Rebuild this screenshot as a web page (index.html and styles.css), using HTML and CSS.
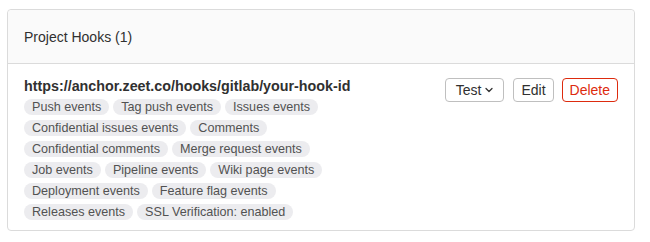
FILE: index.html
```html
<!DOCTYPE html>
<html lang="en">
<head>
    <meta charset="UTF-8">
    <title>Project Hooks</title>
    <link rel="stylesheet" href="styles.css">
</head>
<body>
    <div class="card">
        <div class="card-header">Project Hooks (1)</div>
        <div class="card-body">
            <div class="hook">
                <div class="hook-info">
                    <div class="hook-url">https://anchor.zeet.co/hooks/gitlab/your-hook-id</div>
                    <div class="badges">
                        <span class="badge">Push events</span>
                        <span class="badge">Tag push events</span>
                        <span class="badge">Issues events</span>
                        <span class="badge">Confidential issues events</span>
                        <span class="badge">Comments</span>
                        <span class="badge">Confidential comments</span>
                        <span class="badge">Merge request events</span>
                        <span class="badge">Job events</span>
                        <span class="badge">Pipeline events</span>
                        <span class="badge">Wiki page events</span>
                        <span class="badge">Deployment events</span>
                        <span class="badge">Feature flag events</span>
                        <span class="badge">Releases events</span>
                        <span class="badge">SSL Verification: enabled</span>
                    </div>
                </div>
                <div class="hook-actions">
                    <button class="btn btn-test">Test
                        <svg width="10" height="10" viewBox="0 0 10 10"><path d="M2 3.5 L5 6.5 L8 3.5" fill="none" stroke="#333" stroke-width="1.3" stroke-linecap="round" stroke-linejoin="round"/></svg>
                    </button>
                    <button class="btn">Edit</button>
                    <button class="btn btn-danger">Delete</button>
                </div>
            </div>
        </div>
    </div>
</body>
</html>
```

FILE: styles.css
```css
body {
    margin: 0;
    padding: 9px 15px 0 7px;
    font-family: "Liberation Sans", Arial, sans-serif;
    color: #303030;
    background: #fff;
}
.card {
    border: 1px solid #dbdbdb;
    border-radius: 4px;
    height: 222px;
    box-sizing: border-box;
}
.card-header {
    background: #fafafa;
    border-bottom: 1px solid #dbdbdb;
    border-radius: 4px 4px 0 0;
    height: 54px;
    box-sizing: border-box;
    padding: 19px 16px 0;
    font-size: 14px;
    color: #303030;
}
.card-body {
    padding: 13px 16px 0;
}
.hook {
    display: flex;
    justify-content: space-between;
}
.hook-url {
    font-weight: bold;
    font-size: 14.3px;
    color: #303030;
    line-height: 18px;
    margin-bottom: 4px;
}
.badges {
    display: flex;
    flex-wrap: wrap;
    gap: 5px 4px;
    width: 330px;
}
.badge {
    background: #ececef;
    color: #525252;
    font-size: 12.6px;
    line-height: 16px;
    height: 16px;
    padding: 0 8px;
    border-radius: 8px;
}
.hook-actions {
    display: flex;
    align-items: flex-start;
    gap: 8px;
    padding-top: 1px;
}
.btn {
    font-family: inherit;
    font-size: 14px;
    color: #303030;
    background: #fff;
    border: 1px solid #bfbfbf;
    border-radius: 4px;
    height: 24px;
    padding: 0 7px;
    display: flex;
    align-items: center;
    gap: 3px;
}
.btn-test {
    padding: 0 9px 0 10px;
    margin-right: 1px;
}
.btn-danger {
    color: #dd2b0e;
    border-color: #dd2b0e;
}
```
